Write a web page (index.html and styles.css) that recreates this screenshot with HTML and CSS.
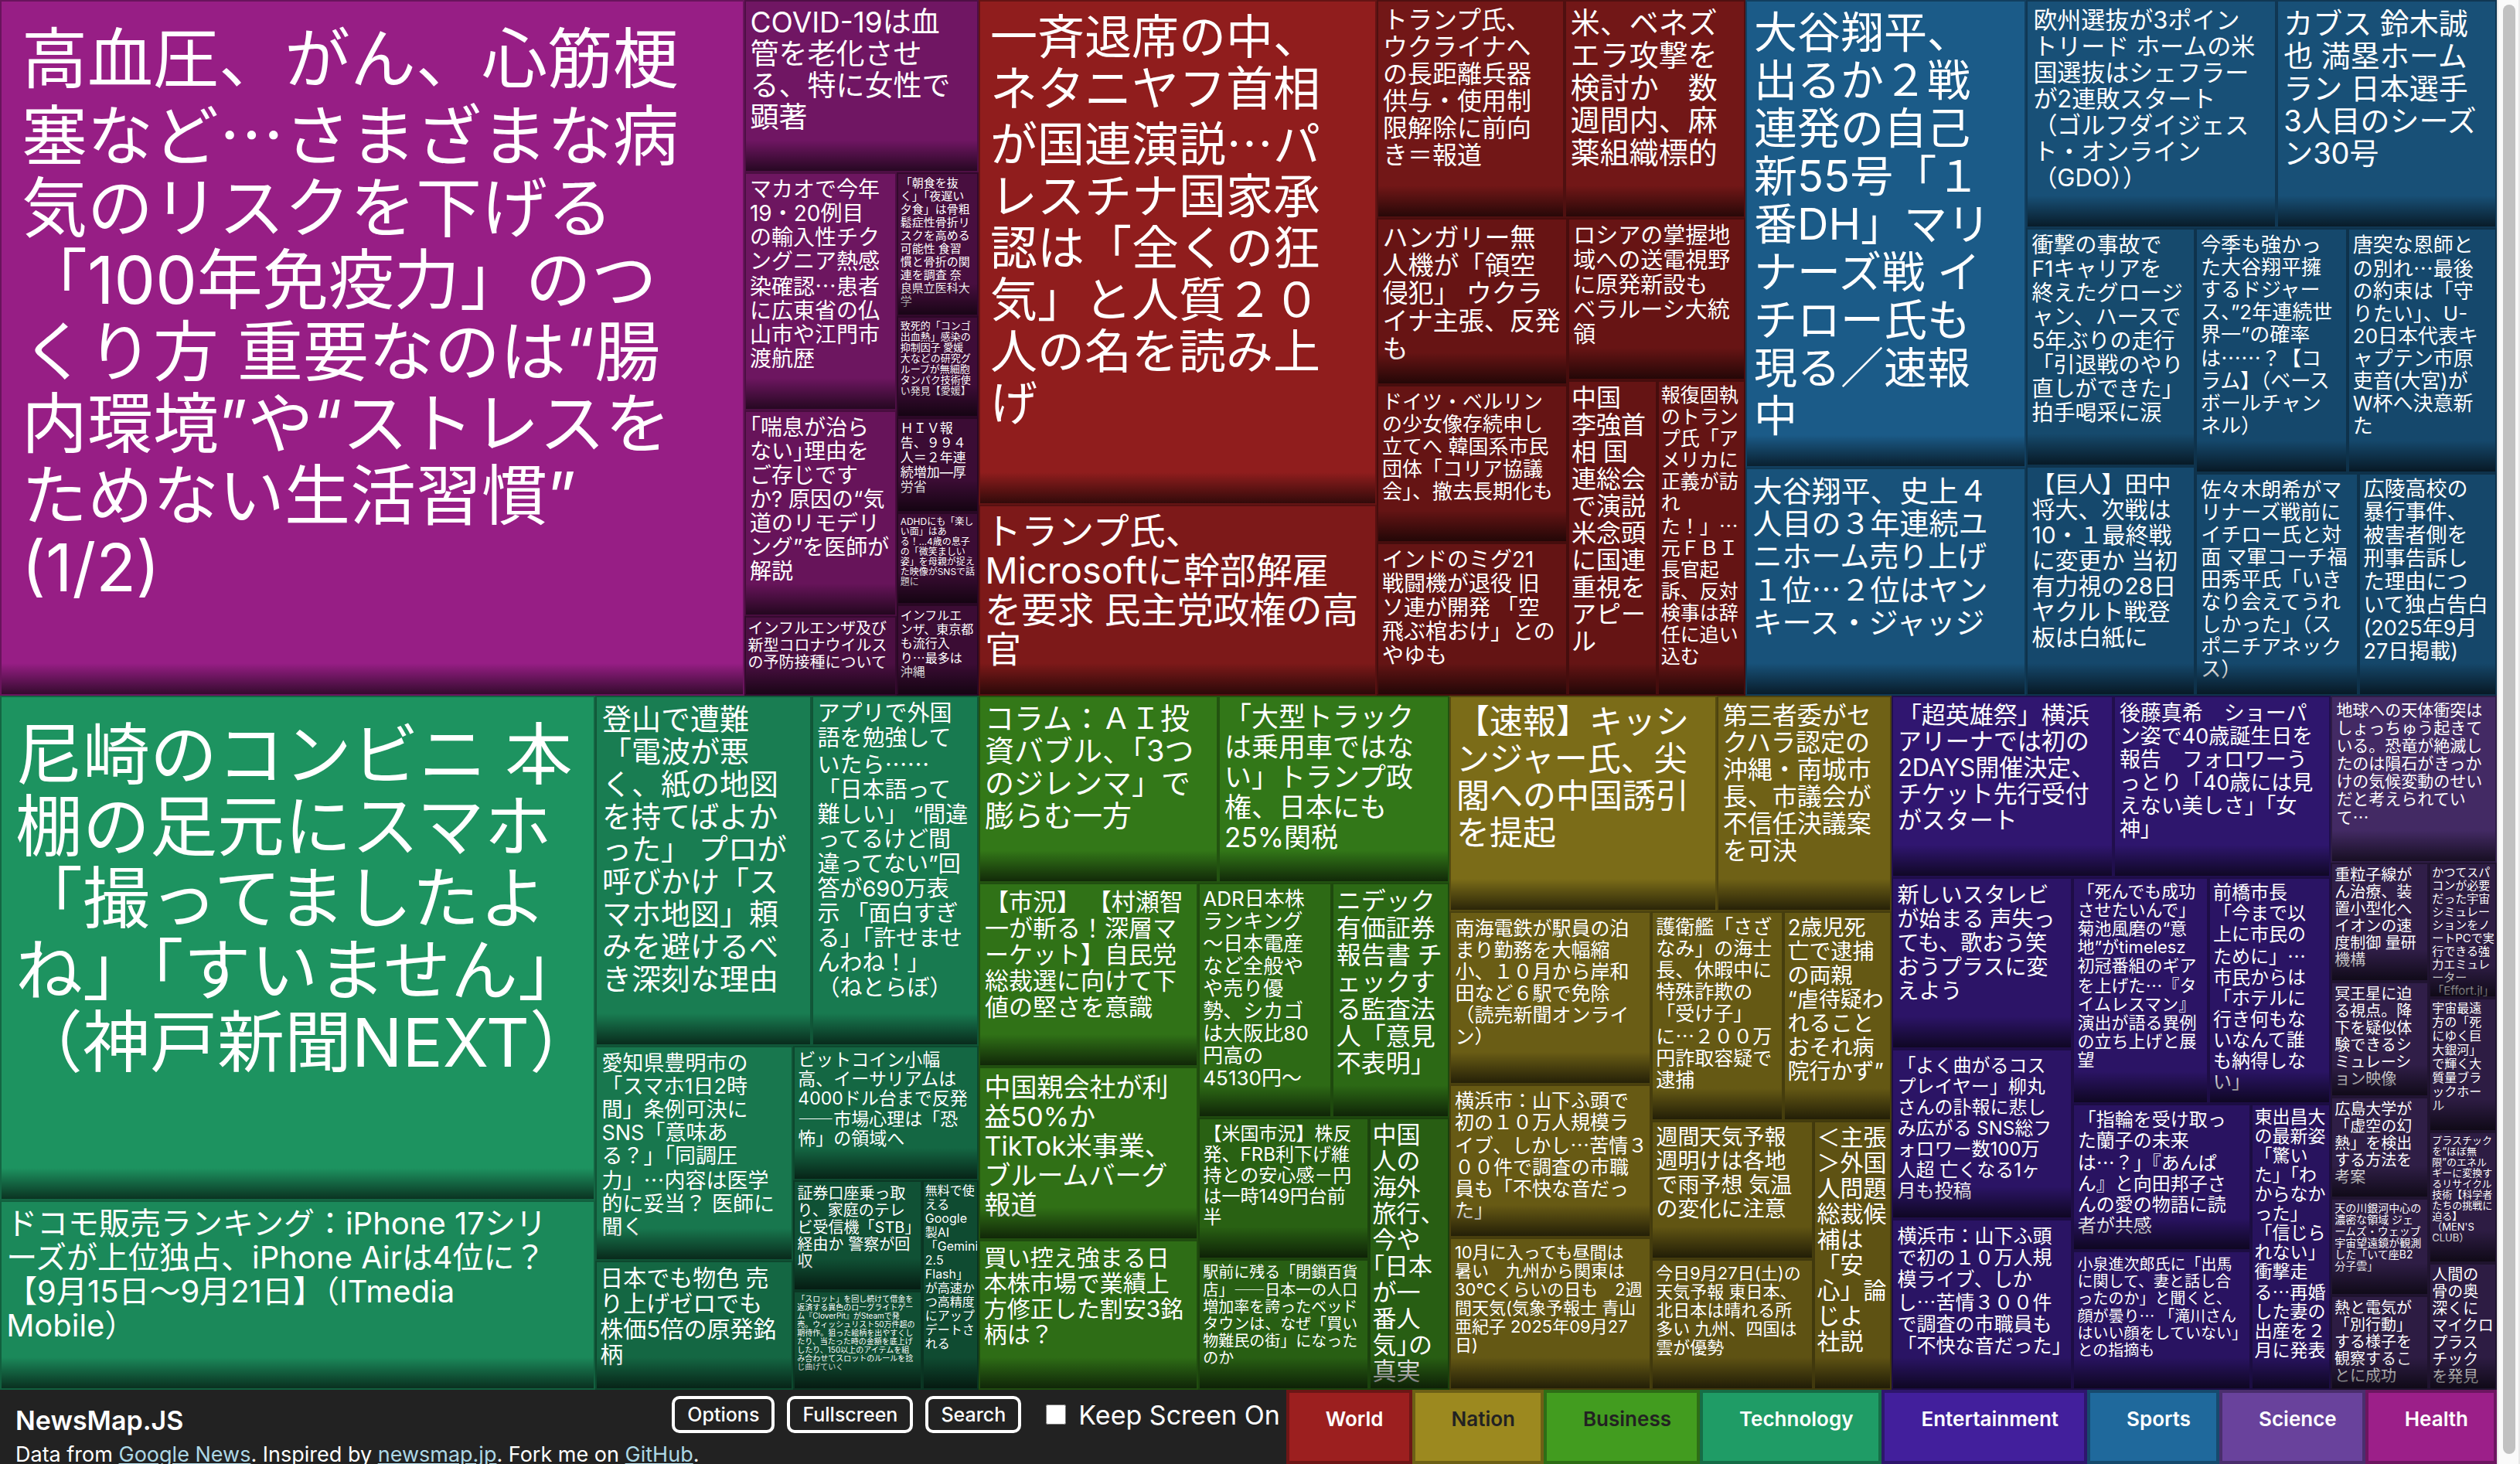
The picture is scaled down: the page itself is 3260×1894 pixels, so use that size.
FILE: index.html
```html
<!DOCTYPE html>
<html lang="ja">
<head>
<meta charset="utf-8">
<title>NewsMap.JS</title>
<meta name="viewport" content="width=device-width, initial-scale=1">
<link rel="stylesheet" href="styles.css">
</head>
<body>
<div class="page">
<main class="map col">
  <div class="row" style="flex-grow:900">
    <section class="row health" style="flex-grow:1266">
      <a href="#" class="cell t85 k97" style="flex-grow:963"><span>高血圧、がん、心筋梗<br>塞など<i>…</i>さまざまな病<br>気のリスクを下げる<br>「100年免疫力」のつ<br>くり方 重要なのは“腸<br>内環境”や“ストレスを<br>ためない生活習慣”<br>(1/2)</span></a>
      <div class="col" style="flex-grow:303">
        <a href="#" class="cell t37 k72" style="flex-grow:223"><span>COVID-19は血<br>管を老化させ<br>る、特に女性で<br>顕著</span></a>
        <div class="row" style="flex-grow:677">
          <div class="col" style="flex-grow:197">
            <a href="#" class="cell t28 k70" style="flex-grow:308"><span>マカオで今年<br>19・20例目<br>の輸入性チク<br>ングニア熱感<br>染確認<i>…</i>患者<br>に広東省の仏<br>山市や江門市<br>渡航歴</span></a>
            <a href="#" class="cell t28 k66 tight" style="flex-grow:266"><span>「喘息が治ら<br>ない」理由を<br>ご存じです<br>か? 原因の“気<br>道のリモデリ<br>ング”を医師が<br>解説</span></a>
            <a href="#" class="cell t20 k48" style="flex-grow:103"><span>インフルエンザ及び<br>新型コロナウイルス<br>の予防接種について</span></a>
          </div>
          <div class="col" style="flex-grow:106">
            <a href="#" class="cell t15 k46" style="flex-grow:186"><span>「朝食を抜<br>く」「夜遅い<br>夕食」は骨粗<br>鬆症性骨折リ<br>スクを高める<br>可能性 食習<br>慣と骨折の関<br>連を調査 奈<br>良県立医科大<br>学</span></a>
            <a href="#" class="cell t13 k40" style="flex-grow:131"><span>致死的「コンゴ<br>出血熱」感染の<br>抑制因子 愛媛<br>大などの研究グ<br>ループが無細胞<br>タンパク技術使<br>い発見【愛媛】</span></a>
            <a href="#" class="cell t17 k38" style="flex-grow:123"><span>ＨＩＶ報<br>告、９９４<br>人＝２年連<br>続増加―厚<br>労省</span></a>
            <a href="#" class="cell t12 k38" style="flex-grow:119"><span>ADHDにも「楽し<br>い面」はあ<br>る！…4歳の息子<br>の「微笑ましい<br>姿」を母親が捉え<br>た映像がSNSで話<br>題に</span></a>
            <a href="#" class="cell t16 k38" style="flex-grow:118"><span>インフルエ<br>ンザ、東京都<br>も流行入<br>り<i>…</i>最多は<br>沖縄</span></a>
          </div>
        </div>
      </div>
    </section>
    <section class="row world" style="flex-grow:992">
      <div class="col" style="flex-grow:515">
        <a href="#" class="cell t61 k92" style="flex-grow:653"><span>一斉退席の中、<br>ネタニヤフ首相<br>が国連演説<i>…</i>パ<br>レスチナ国家承<br>認は「全くの狂<br>気」と人質２０<br>人の名を読み上<br>げ</span></a>
        <a href="#" class="cell t47 k80" style="flex-grow:247"><span>トランプ氏、<br>Microsoftに幹部解雇<br>を要求 民主党政権の高<br>官</span></a>
      </div>
      <div class="col" style="flex-grow:477">
        <div class="row" style="flex-grow:282">
          <a href="#" class="cell t32 k73" style="flex-grow:243"><span>トランプ氏、<br>ウクライナへ<br>の長距離兵器<br>供与・使用制<br>限解除に前向<br>き＝報道</span></a>
          <a href="#" class="cell t38 k73" style="flex-grow:234"><span>米、ベネズ<br>エラ攻撃を<br>検討か　数<br>週間内、麻<br>薬組織標的</span></a>
        </div>
        <div class="row" style="flex-grow:618">
          <div class="col" style="flex-grow:247">
            <a href="#" class="cell t33 k66" style="flex-grow:216"><span>ハンガリー無<br>人機が「領空<br>侵犯」 ウクラ<br>イナ主張、反発<br>も</span></a>
            <a href="#" class="cell t26 k65" style="flex-grow:204"><span>ドイツ・ベルリン<br>の少女像存続申し<br>立てへ 韓国系市民<br>団体「コリア協議<br>会」、撤去長期化も</span></a>
            <a href="#" class="cell t28 k64" style="flex-grow:198"><span>インドのミグ21<br>戦闘機が退役 旧<br>ソ連が開発 「空<br>飛ぶ棺おけ」との<br>やゆも</span></a>
          </div>
          <div class="col" style="flex-grow:230">
            <a href="#" class="cell t29 k66" style="flex-grow:210"><span>ロシアの掌握地<br>域への送電視野<br>に原発新設も<br>ベラルーシ大統<br>領</span></a>
            <div class="row" style="flex-grow:408">
              <a href="#" class="cell t32 k65" style="flex-grow:116"><span>中国<br>李強首<br>相 国<br>連総会<br>で演説<br>米念頭<br>に国連<br>重視を<br>アピー<br>ル</span></a>
              <a href="#" class="cell t25 k64" style="flex-grow:114"><span>報復固執<br>のトラン<br>プ氏「ア<br>メリカに<br>正義が訪<br>れ<br>た！」<i>…</i><br>元ＦＢＩ<br>長官起<br>訴、反対<br>検事は辞<br>任に追い<br>込む</span></a>
            </div>
          </div>
        </div>
      </div>
    </section>
    <section class="row sports" style="flex-grow:972">
      <div class="col" style="flex-grow:363">
        <a href="#" class="cell t56 k87" style="flex-grow:605"><span>大谷翔平、<br>出るか２戦<br>連発の自己<br>新55号「１<br>番DH」マリ<br>ナーズ戦 イ<br>チロー氏も<br>現る／速報<br>中</span></a>
        <a href="#" class="cell t38 k78" style="flex-grow:295"><span>大谷翔平、史上４<br>人目の３年連続ユ<br>ニホーム売り上げ<br>１位<i>…</i>２位はヤン<br>キース・ジャッジ</span></a>
      </div>
      <div class="col" style="flex-grow:609">
        <div class="row" style="flex-grow:295">
          <a href="#" class="cell t31 k76" style="flex-grow:324"><span>欧州選抜が3ポイン<br>トリード ホームの米<br>国選抜はシェフラー<br>が2連敗スタート<br>（ゴルフダイジェス<br>ト・オンライン<br>（GDO））</span></a>
          <a href="#" class="cell t38 k76" style="flex-grow:285"><span>カブス 鈴木誠<br>也 満塁ホーム<br>ラン 日本選手<br>3人目のシーズ<br>ン30号</span></a>
        </div>
        <div class="row" style="flex-grow:605">
          <div class="col" style="flex-grow:219">
            <a href="#" class="cell t28 k70" style="flex-grow:308"><span>衝撃の事故で<br>F1キャリアを<br>終えたグロージ<br>ャン、ハースで<br>5年ぶりの走行<br>「引退戦のやり<br>直しができた」<br>拍手喝采に涙</span></a>
            <a href="#" class="cell t30 k69" style="flex-grow:297"><span>【巨人】田中<br>将大、次戦は<br>10・１最終戦<br>に変更か 当初<br>有力視の28日<br>ヤクルト戦登<br>板は白紙に</span></a>
          </div>
          <div class="col" style="flex-grow:390">
            <div class="row" style="flex-grow:317">
              <a href="#" class="cell t26 k69" style="flex-grow:197"><span>今季も強かっ<br>た大谷翔平擁<br>するドジャー<br>ス、”2年連続世<br>界一”の確率<br>は<i>……</i>？【コ<br>ラム】（ベース<br>ボールチャン<br>ネル）</span></a>
              <a href="#" class="cell t26 k69" style="flex-grow:193"><span>唐突な恩師と<br>の別れ<i>…</i>最後<br>の約束は「守<br>りたい」、U-<br>20日本代表キ<br>ャプテン市原<br>吏音(大宮)が<br>W杯へ決意新<br>た</span></a>
            </div>
            <div class="row" style="flex-grow:288">
              <a href="#" class="cell t26 k69" style="flex-grow:211"><span>佐々木朗希がマ<br>リナーズ戦前に<br>イチロー氏と対<br>面 マ軍コーチ福<br>田秀平氏「いき<br>なり会えてうれ<br>しかった」（ス<br>ポニチアネック<br>ス）</span></a>
              <a href="#" class="cell t27 k68" style="flex-grow:179"><span>広陵高校の<br>暴行事件、<br>被害者側を<br>刑事告訴し<br>た理由につ<br>いて独占告白<br>(2025年9月<br>27日掲載)</span></a>
            </div>
          </div>
        </div>
      </div>
    </section>
  </div>
  <div class="row" style="flex-grow:898">
    <section class="row technology" style="flex-grow:1266">
      <div class="col" style="flex-grow:770">
        <a href="#" class="cell t87 k94" style="flex-grow:653"><span>尼崎のコンビニ 本<br>棚の足元にスマホ<br>「撮ってましたよ<br>ね」「すいません」<br>（神戸新聞NEXT）</span></a>
        <a href="#" class="cell t40 k88" style="flex-grow:245"><span>ドコモ販売ランキング：iPhone 17シリ<br>ーズが上位独占、iPhone Airは4位に？<br>【9月15日〜9月21日】（ITmedia<br>Mobile）</span></a>
      </div>
      <div class="col" style="flex-grow:496">
        <div class="row" style="flex-grow:453">
          <a href="#" class="cell t38 k80" style="flex-grow:280"><span>登山で遭難<br>「電波が悪<br>く、紙の地図<br>を持てばよか<br>った」 プロが<br>呼びかけ「ス<br>マホ地図」頼<br>みを避けるべ<br>き深刻な理由</span></a>
          <a href="#" class="cell t29 k78" style="flex-grow:216"><span>アプリで外国<br>語を勉強して<br>いたら<i>……</i><br>「日本語って<br>難しい」 “間違<br>ってるけど間<br>違ってない”回<br>答が690万表<br>示 「面白すぎ<br>る」「許せませ<br>んわね！」<br>（ねとらぼ）</span></a>
        </div>
        <div class="row" style="flex-grow:445">
          <div class="col" style="flex-grow:256">
            <a href="#" class="cell t27 k76" style="flex-grow:278"><span>愛知県豊明市の<br>「スマホ1日2時<br>間」条例可決に<br>SNS「意味あ<br>る？」「同調圧<br>力」<i>…</i>内容は医学<br>的に妥当？ 医師に<br>聞く</span></a>
            <a href="#" class="cell t30 k66" style="flex-grow:167"><span>日本でも物色 売<br>り上げゼロでも<br>株価5倍の原発銘<br>柄</span></a>
          </div>
          <div class="col" style="flex-grow:240">
            <a href="#" class="cell t23 k66" style="flex-grow:174"><span>ビットコイン小幅<br>高、イーサリアムは<br>4000ドル台まで反発<br><i>――</i>市場心理は「恐<br>怖」の領域へ</span></a>
            <div class="row" style="flex-grow:271">
              <div class="col" style="flex-grow:167">
                <a href="#" class="cell t20 k52" style="flex-grow:143"><span>証券口座乗っ取<br>り、家庭のテレ<br>ビ受信機「STB」<br>経由か 警察が回<br>収</span></a>
                <a href="#" class="cell t10 k50" style="flex-grow:128"><span>「スロット」を回し続けて借金を<br>返済する異色のローグライトゲー<br>ム『CloverPit』がSteamで発<br>売。ウィッシュリスト50万件超の<br>期待作。狙った絵柄を出やすくし<br>たり、当たった時の金額を底上げ<br>したり、150以上のアイテムを組<br>み合わせてスロットのルールを捻<br>じ曲げていく</span></a>
              </div>
              <a href="#" class="cell t16 k48" style="flex-grow:73"><span>無料で使<br>える<br>Google<br>製AI<br>「Gemini<br>2.5<br>Flash」<br>が高速か<br>つ高精度<br>にアップ<br>デートさ<br>れる</span></a>
            </div>
          </div>
        </div>
      </div>
    </section>
    <section class="col business" style="flex-grow:609">
      <div class="row" style="flex-grow:242">
        <a href="#" class="cell t38 k77" style="flex-grow:310"><span>コラム：ＡＩ投<br>資バブル、「3つ<br>のジレンマ」で<br>膨らむ一方</span></a>
        <a href="#" class="cell t35 k76" style="flex-grow:299"><span>「大型トラック<br>は乗用車ではな<br>い」トランプ政<br>権、日本にも<br>25%関税</span></a>
      </div>
      <div class="row" style="flex-grow:656">
        <div class="col" style="flex-grow:284">
          <a href="#" class="cell t31 k73" style="flex-grow:238"><span>【市況】 【村瀬智<br>一が斬る！深層マ<br>ーケット】自民党<br>総裁選に向けて下<br>値の堅さを意識</span></a>
          <a href="#" class="cell t34 k72" style="flex-grow:224"><span>中国親会社が利<br>益50%か<br>TikTok米事業、<br>ブルームバーグ<br>報道</span></a>
          <a href="#" class="cell t30 k70" style="flex-grow:194"><span>買い控え強まる日<br>本株市場で業績上<br>方修正した割安3銘<br>柄は？</span></a>
        </div>
        <div class="col" style="flex-grow:325">
          <div class="row" style="flex-grow:304">
            <a href="#" class="cell t26 k68" style="flex-grow:173"><span>ADR日本株<br>ランキング<br>〜日本電産<br>など全般や<br>や売り優<br>勢、シカゴ<br>は大阪比80<br>円高の<br>45130円〜</span></a>
            <a href="#" class="cell t32 k67" style="flex-grow:152"><span>ニデック<br>有価証券<br>報告書 チ<br>ェックす<br>る監査法<br>人「意見<br>不表明」</span></a>
          </div>
          <div class="row" style="flex-grow:352">
            <div class="col" style="flex-grow:221">
              <a href="#" class="cell t24 k62" style="flex-grow:183"><span>【米国市況】株反<br>発、FRB利下げ維<br>持との安心感－円<br>は一時149円台前<br>半</span></a>
              <a href="#" class="cell t20 k61" style="flex-grow:169"><span>駅前に残る「閉鎖百貨<br>店」<i>――</i>日本一の人口<br>増加率を誇ったベッド<br>タウンは、なぜ「買い<br>物難民の街」になった<br>のか</span></a>
            </div>
            <a href="#" class="cell t31 k60 tight" style="flex-grow:104"><span>中国<br>人の<br>海外<br>旅行、<br>今や<br>「日本<br>が一<br>番人<br>気」の<br>真実</span></a>
          </div>
        </div>
      </div>
    </section>
    <section class="col nation" style="flex-grow:572">
      <div class="row" style="flex-grow:279">
        <a href="#" class="cell t43 k79" style="flex-grow:346"><span>【速報】キッシ<br>ンジャー氏、尖<br>閣への中国誘引<br>を提起</span></a>
        <a href="#" class="cell t32 k71" style="flex-grow:226"><span>第三者委がセ<br>クハラ認定の<br>沖縄・南城市<br>長、市議会が<br>不信任決議案<br>を可決</span></a>
      </div>
      <div class="row" style="flex-grow:619">
        <div class="col" style="flex-grow:261">
          <a href="#" class="cell t25 k68" style="flex-grow:224"><span>南海電鉄が駅員の泊<br>まり勤務を大幅縮<br>小、１０月から岸和<br>田など６駅で免除<br>（読売新聞オンライ<br>ン）</span></a>
          <a href="#" class="cell t25 k66" style="flex-grow:198"><span>横浜市：山下ふ頭で<br>初の１０万人規模ラ<br>イブ、しかし<i>…</i>苦情３<br>００件で調査の市職<br>員も「不快な音だっ<br>た」</span></a>
          <a href="#" class="cell t22 k64" style="flex-grow:197"><span>10月に入っても昼間は<br>暑い　九州から関東は<br>30℃くらいの日も　2週<br>間天気(気象予報士 青山<br>亜紀子 2025年09月27<br>日)</span></a>
        </div>
        <div class="col" style="flex-grow:311">
          <div class="row" style="flex-grow:271">
            <a href="#" class="cell t25 k65" style="flex-grow:171"><span>護衛艦「さざ<br>なみ」の海士<br>長、休暇中に<br>特殊詐欺の<br>「受け子」<br>に<i>…</i>２００万<br>円詐取容疑で<br>逮捕</span></a>
            <a href="#" class="cell t28 k64" style="flex-grow:140"><span>2歳児死<br>亡で逮捕<br>の両親<br>“虐待疑わ<br>れること<br>おそれ病<br>院行かず”</span></a>
          </div>
          <div class="row" style="flex-grow:348">
            <div class="col" style="flex-grow:210">
              <a href="#" class="cell t28 k62" style="flex-grow:179"><span>週間天気予報<br>週明けは各地<br>で雨予想 気温<br>の変化に注意</span></a>
              <a href="#" class="cell t22 k60" style="flex-grow:169"><span>今日9月27日(土)の<br>天気予報 東日本、<br>北日本は晴れる所<br>多い 九州、四国は<br>雲が優勢</span></a>
            </div>
            <a href="#" class="cell t30 k60" style="flex-grow:101"><span>＜主張<br>＞外国<br>人問題<br>総裁候<br>補は<br>「安<br>心」論<br>じよ<br>社説</span></a>
          </div>
        </div>
      </div>
    </section>
    <section class="col entertainment" style="flex-grow:568">
      <div class="row" style="flex-grow:235">
        <a href="#" class="cell t31 k72" style="flex-grow:287"><span>「超英雄祭」横浜<br>アリーナでは初の<br>2DAYS開催決定、<br>チケット先行受付<br>がスタート</span></a>
        <a href="#" class="cell t27 k70" style="flex-grow:281"><span>後藤真希　ショーパ<br>ン姿で40歳誕生日を<br>報告　フォロワーう<br>っとり「40歳には見<br>えない美しさ」「女<br>神」</span></a>
      </div>
      <div class="row" style="flex-grow:663">
        <div class="col" style="flex-grow:234">
          <a href="#" class="cell t28 k66" style="flex-grow:222"><span>新しいスタレビ<br>が始まる 声失っ<br>ても、歌おう笑<br>おうプラスに変<br>えよう</span></a>
          <a href="#" class="cell t24 k65" style="flex-grow:220"><span>「よく曲がるコス<br>プレイヤー」柳丸<br>さんの訃報に悲し<br>み広がる SNS総フ<br>ォロワー数100万<br>人超 亡くなる1ヶ<br>月も投稿</span></a>
          <a href="#" class="cell t25 k64" style="flex-grow:221"><span>横浜市：山下ふ頭<br>で初の１０万人規<br>模ライブ、しか<br>し<i>…</i>苦情３００件<br>で調査の市職員も<br>「不快な音だった」</span></a>
        </div>
        <div class="col" style="flex-grow:334">
          <div class="row" style="flex-grow:293">
            <a href="#" class="cell t22 k65" style="flex-grow:176"><span>「死んでも成功<br>させたいんで」<br>菊池風磨の“意<br>地”がtimelesz<br>初冠番組のギア<br>を上げた<i>…</i>『タ<br>イムレスマン』<br>演出が語る異例<br>の立ち上げと展<br>望</span></a>
            <a href="#" class="cell t24 k64" style="flex-grow:158"><span>前橋市長<br>「今まで以<br>上に市民の<br>ために」<i>…</i><br>市民からは<br>「ホテルに<br>行き何もな<br>いなんて誰<br>も納得しな<br>い」</span></a>
          </div>
          <div class="row" style="flex-grow:370">
            <div class="col" style="flex-grow:231">
              <a href="#" class="cell t24 k62" style="flex-grow:190"><span>「指輪を受け取っ<br>た蘭子の未来<br>は<i>…</i>？」『あんぱ<br>ん』と向田邦子さ<br>んの愛の物語に読<br>者が共感</span></a>
              <a href="#" class="cell t20 k62" style="flex-grow:180"><span>小泉進次郎氏に「出馬<br>に関して、妻と話し合<br>ったのか」と聞くと、<br>顔が曇り<i>…</i> 「滝川さん<br>はいい顔をしていない」<br>との指摘も</span></a>
            </div>
            <a href="#" class="cell t23 k60" style="flex-grow:103"><span>東出昌大<br>の最新姿<br>「驚い<br>た」「わ<br>からなか<br>った」<br>「信じら<br>れない」<br>衝撃走<br>る<i>…</i>再婚<br>した妻の<br>出産を２<br>月に発表</span></a>
          </div>
        </div>
      </div>
    </section>
    <section class="col science" style="flex-grow:215">
      <a href="#" class="cell t21 k64" style="flex-grow:216"><span>地球への天体衝突は<br>しょっちゅう起きて<br>いる。恐竜が絶滅し<br>たのは隕石がきっか<br>けの気候変動のせい<br>だと考えられてい<br>て<i>…</i></span></a>
      <div class="row" style="flex-grow:682">
        <div class="col" style="flex-grow:127">
          <a href="#" class="cell t20 k46" style="flex-grow:154"><span>重粒子線が<br>ん治療、装<br>置小型化へ<br>イオンの速<br>度制御 量研<br>機構</span></a>
          <a href="#" class="cell t20 k46" style="flex-grow:149"><span>冥王星に迫<br>る視点。降<br>下を疑似体<br>験できるシ<br>ミュレーシ<br>ョン映像</span></a>
          <a href="#" class="cell t20 k45" style="flex-grow:131"><span>広島大学が<br>「虚空の幻<br>熱」を検出<br>する方法を<br>考案</span></a>
          <a href="#" class="cell t14 k44" style="flex-grow:126"><span>天の川銀河中心の<br>濃密な領域 ジェ<br>ームズ・ウェッブ<br>宇宙望遠鏡が観測<br>した「いて座B2<br>分子雲」</span></a>
          <a href="#" class="cell t20 k43" style="flex-grow:122"><span>熱と電気が<br>「別行動」<br>する様子を<br>観察するこ<br>とに成功</span></a>
        </div>
        <div class="col" style="flex-grow:88">
          <a href="#" class="cell t15 k43" style="flex-grow:175"><span>かつてスパ<br>コンが必要<br>だった宇宙<br>シミュレー<br>ションをノ<br>ートPCで実<br>行できる強<br>力エミュレ<br>ーター<br>「Effort.jl」</span></a>
          <a href="#" class="cell t16 k43" style="flex-grow:173"><span>宇宙最遠<br>方の「死<br>にゆく巨<br>大銀河」<br>で輝く大<br>質量ブラ<br>ックホー<br>ル</span></a>
          <a href="#" class="cell t13 k43" style="flex-grow:170"><span>プラスチック<br>を“ほぼ無<br>限”のエネル<br>ギーに変換す<br>るリサイクル<br>技術【科学者<br>たちの挑戦に<br>迫る】<br>（MEN'S<br>CLUB）</span></a>
          <a href="#" class="cell t20 k43" style="flex-grow:164"><span>人間の<br>骨の奥<br>深くに<br>マイクロ<br>プラス<br>チック<br>を発見</span></a>
        </div>
      </div>
    </section>
  </div>
</main>
<footer class="bar">
  <div class="about">
    <h1>NewsMap.JS</h1>
    <p>Data from <a href="#">Google News</a>. Inspired by <a href="#">newsmap.jp</a>. Fork me on <a href="#">GitHub</a>.</p>
  </div>
  <div class="tools">
    <button type="button">Options</button>
    <button type="button">Fullscreen</button>
    <button type="button">Search</button>
    <label><input type="checkbox">Keep Screen On</label>
  </div>
  <nav class="legend">
    <button type="button" class="world">World</button>
    <button type="button" class="nation dark">Nation</button>
    <button type="button" class="business dark">Business</button>
    <button type="button" class="technology">Technology</button>
    <button type="button" class="entertainment">Entertainment</button>
    <button type="button" class="sports">Sports</button>
    <button type="button" class="science">Science</button>
    <button type="button" class="health">Health</button>
  </nav>
</footer>
</div>
<div class="scroll"><div class="thumb"></div></div>
</body>
</html>
```

FILE: styles.css
```css
* { box-sizing: border-box; }

body {
  margin: 0;
  height: 100vh;
  display: flex;
  overflow: hidden;
  background: #222;
  color: #fff;
  font-family: Inter, "Noto Sans CJK JP", sans-serif;
}

.page {
  flex: 1;
  min-width: 0;
  display: flex;
  flex-direction: column;
}

/* treemap: nested rows and columns, each weighted by flex-grow */
.map { flex: 1; min-height: 0; }
.row, .col { display: flex; }
.col { flex-direction: column; }
.row > *, .col > * {
  flex-basis: 0;
  min-width: 0;
  min-height: 0;
}

.health { --base: #9c1f89; }
.world { --base: #9c1f1f; }
.sports { --base: #1f699c; }
.technology { --base: #1f9c66; }
.business { --base: #429c1f; }
.nation { --base: #9c891f; }
.entertainment { --base: #421f9c; }
.science { --base: #69429c; }

.cell {
  container-type: size;
  display: flex;
  background: color-mix(in srgb, var(--base) var(--k), #000);
  color: #fff;
  text-decoration: none;
}

.cell > span {
  position: relative;
  flex: 1;
  min-width: 0;
  padding: 2.5cqmin;
  border: 2px solid rgba(0, 0, 0, .3);
  overflow: hidden;
  white-space: nowrap;
}

.cell > span::after {
  content: "";
  position: absolute;
  left: 0;
  right: 0;
  bottom: 0;
  height: 40px;
  background: linear-gradient(transparent, rgba(0, 0, 0, .65));
}

.cell i {
  font-family: "Noto Sans CJK JP", sans-serif;
  font-style: normal;
}

/* half-width brackets for narrow headlines */
.tight { font-feature-settings: "halt"; }

/* brightness steps: newer stories are lighter */
.k97 { --k: 97%; }
.k94 { --k: 94%; }
.k92 { --k: 92%; }
.k88 { --k: 88%; }
.k87 { --k: 87%; }
.k80 { --k: 80%; }
.k79 { --k: 79%; }
.k78 { --k: 78%; }
.k77 { --k: 77%; }
.k76 { --k: 76%; }
.k73 { --k: 73%; }
.k72 { --k: 72%; }
.k71 { --k: 71%; }
.k70 { --k: 70%; }
.k69 { --k: 69%; }
.k68 { --k: 68%; }
.k67 { --k: 67%; }
.k66 { --k: 66%; }
.k65 { --k: 65%; }
.k64 { --k: 64%; }
.k62 { --k: 62%; }
.k61 { --k: 61%; }
.k60 { --k: 60%; }
.k52 { --k: 52%; }
.k50 { --k: 50%; }
.k48 { --k: 48%; }
.k46 { --k: 46%; }
.k45 { --k: 45%; }
.k44 { --k: 44%; }
.k43 { --k: 43%; }
.k40 { --k: 40%; }
.k38 { --k: 38%; }

/* headline sizes */
.t10 { font-size: 10px; line-height: 11px; }
.t12 { font-size: 12px; line-height: 13px; }
.t13 { font-size: 13px; line-height: 14px; }
.t14 { font-size: 14px; line-height: 15px; }
.t15 { font-size: 15px; line-height: 17px; }
.t16 { font-size: 16px; line-height: 18px; }
.t17 { font-size: 17px; line-height: 19px; }
.t20 { font-size: 20px; line-height: 22px; }
.t21 { font-size: 21px; line-height: 23px; }
.t22 { font-size: 22px; line-height: 24px; }
.t23 { font-size: 23px; line-height: 25px; }
.t24 { font-size: 24px; line-height: 27px; }
.t25 { font-size: 25px; line-height: 28px; }
.t26 { font-size: 26px; line-height: 29px; }
.t27 { font-size: 27px; line-height: 30px; }
.t28 { font-size: 28px; line-height: 31px; }
.t29 { font-size: 29px; line-height: 32px; }
.t30 { font-size: 30px; line-height: 33px; }
.t31 { font-size: 31px; line-height: 34px; }
.t32 { font-size: 32px; line-height: 35px; }
.t33 { font-size: 33px; line-height: 36px; }
.t34 { font-size: 34px; line-height: 38px; }
.t35 { font-size: 35px; line-height: 39px; }
.t37 { font-size: 37px; line-height: 41px; }
.t38 { font-size: 38px; line-height: 42px; }
.t40 { font-size: 40px; line-height: 44px; }
.t43 { font-size: 43px; line-height: 48px; }
.t47 { font-size: 47px; line-height: 51px; }
.t56 { font-size: 56px; line-height: 62px; }
.t61 { font-size: 61px; line-height: 67px; }
.t85 { font-size: 85px; line-height: 93px; }
.t87 { font-size: 87px; line-height: 93px; }

/* lead stories get a little more air */
.t85 > span { padding: 28px 26px; }
.t87 > span { padding: 28px 18px; }

.bar {
  height: 96px;
  display: flex;
  align-items: flex-start;
  overflow: hidden;
}

.about { flex: 1; min-width: 0; padding: 16px 0 0 20px; }
.about h1 { margin: 0; font-size: 34px; line-height: 48px; font-weight: 600; }
.about p { margin: 0; font-size: 27px; line-height: 40px; white-space: nowrap; }
.about a { color: #add8e6; }

.tools {
  flex: none;
  display: flex;
  gap: 16px;
  padding: 8px 8px 0 0;
}

.tools button {
  height: 48px;
  padding: 0 16px;
  border: 4px solid #fff;
  border-radius: 10px;
  background: #222;
  color: #fff;
  font: 500 25px/36px Inter, sans-serif;
}

.tools label {
  display: flex;
  align-items: center;
  gap: 16px;
  height: 48px;
  padding-left: 16px;
  font-size: 34px;
  white-space: nowrap;
}

.tools input { width: 26px; height: 26px; margin: 0; }

.legend { flex: none; display: flex; align-self: stretch; }

.legend button {
  display: flex;
  border: 4px solid color-mix(in srgb, var(--base) 70%, #000);
  border-radius: 0;
  background: var(--base);
  color: #fff;
  padding: 18px 33px 0 47px;
  font: 600 26px/32px Inter, sans-serif;
}

.legend .dark { color: #222; }

.scroll {
  flex: none;
  width: 30px;
  padding: 6px 4px 13px 6px;
  border-left: 2px solid #e8e8e8;
  border-right: 2px solid #e8e8e8;
  background: #fafafa;
}

.scroll .thumb {
  width: 16px;
  height: 100%;
  border-radius: 8px;
  background: #c1c1c1;
}
```
